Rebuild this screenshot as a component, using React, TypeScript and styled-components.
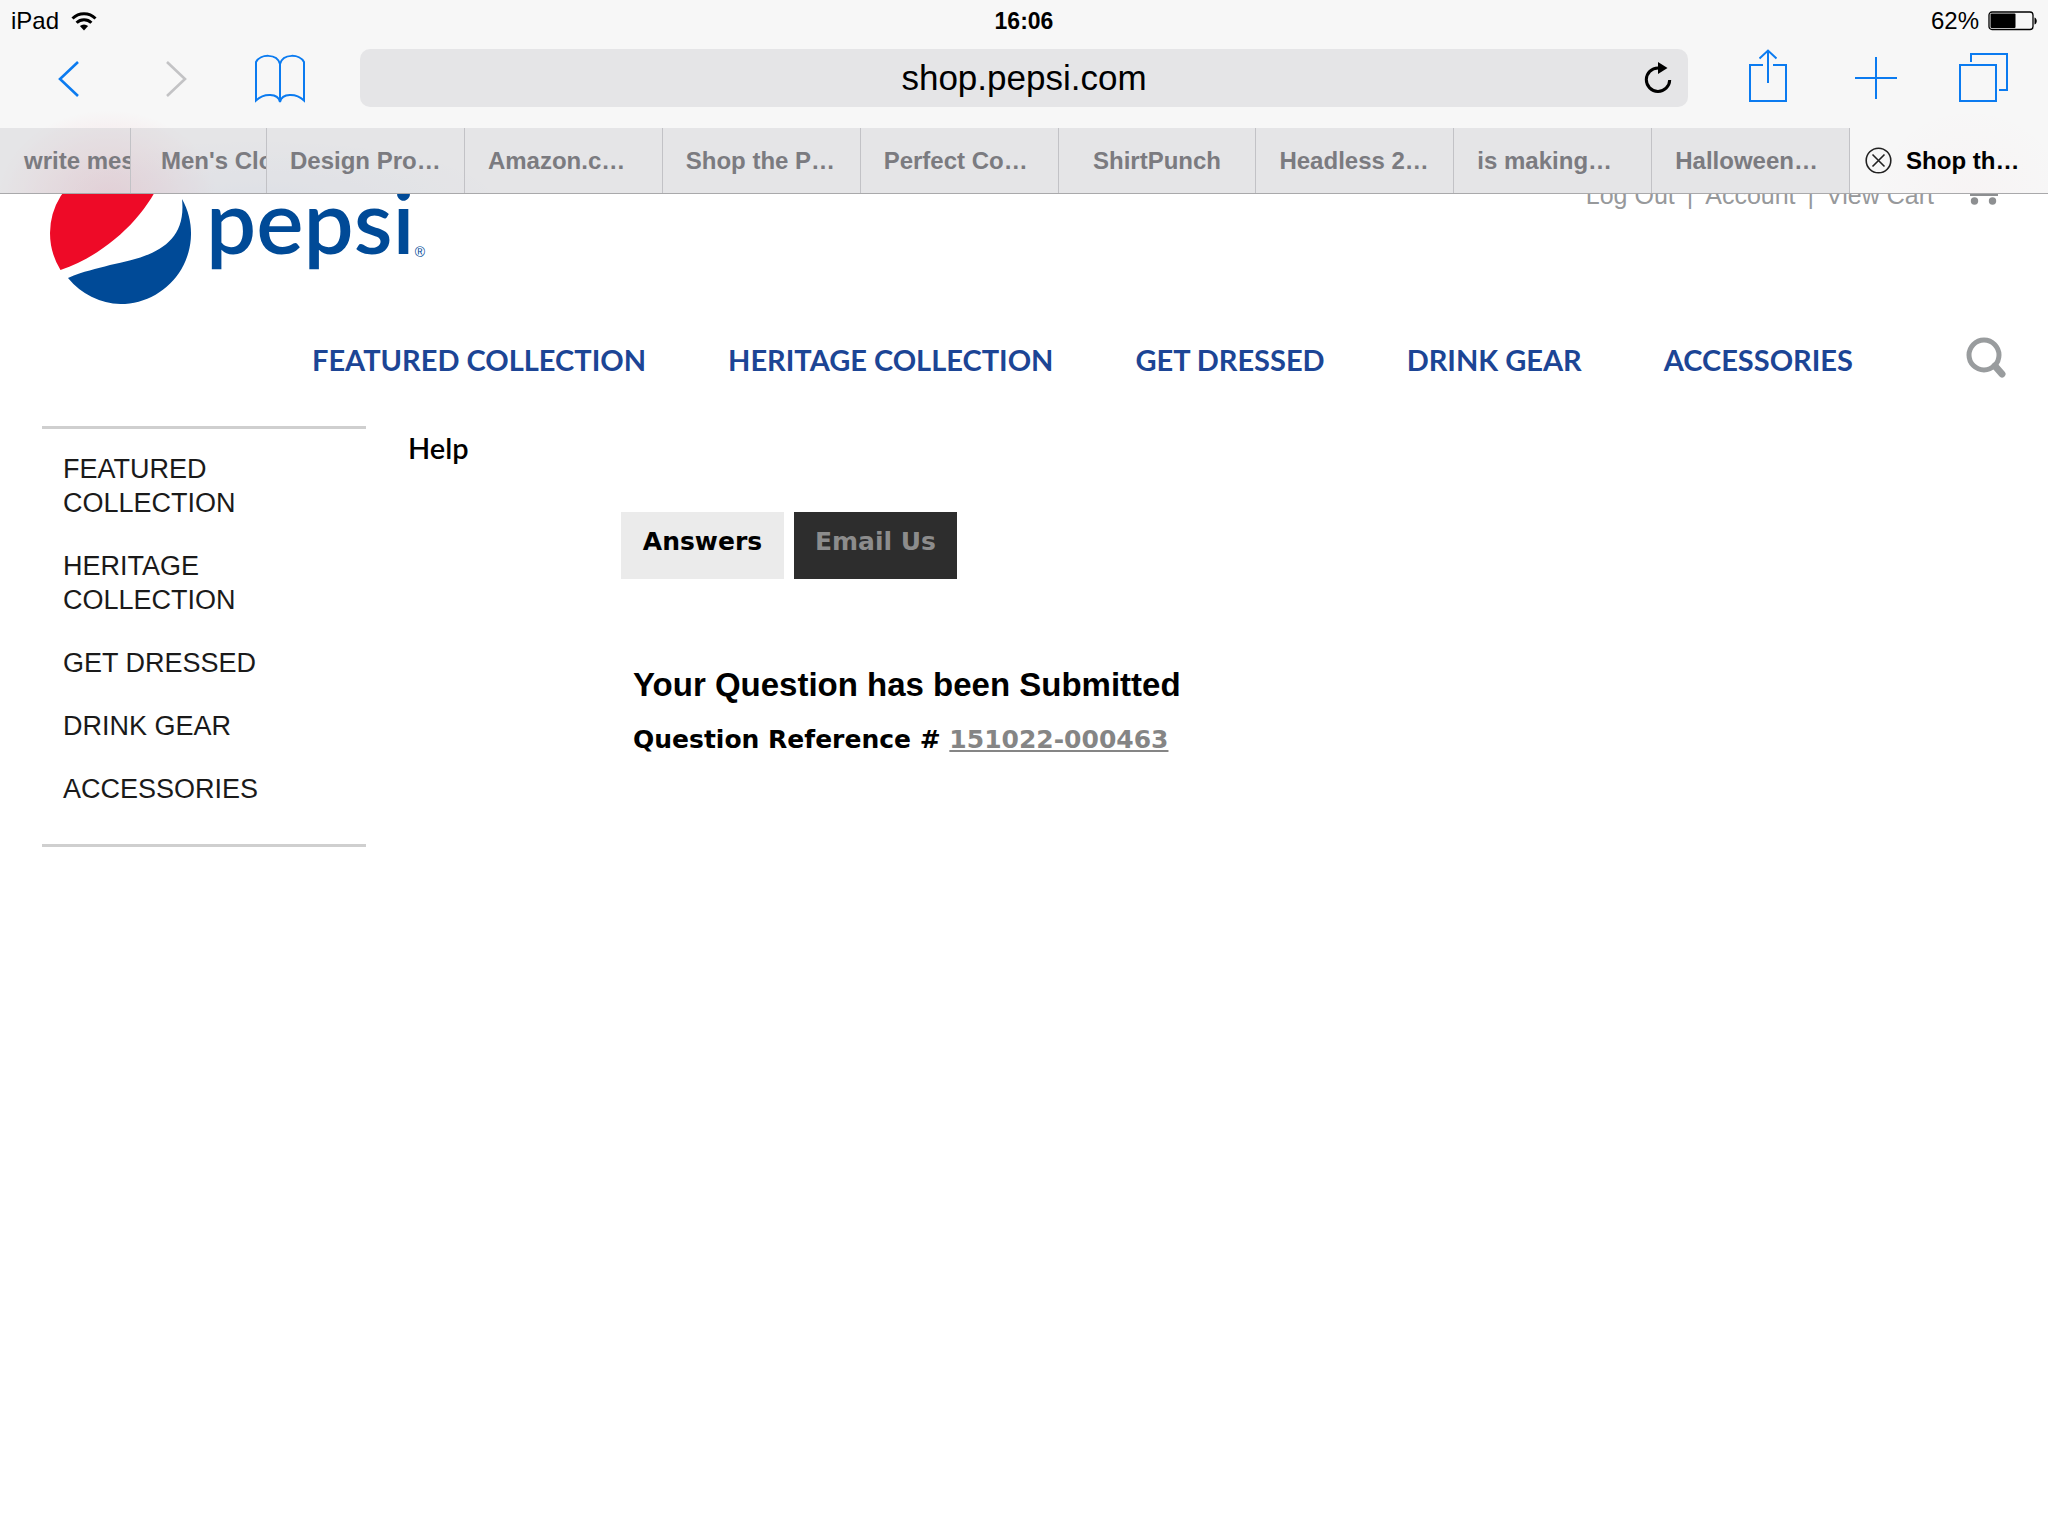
import React from "react";
import styled, { createGlobalStyle } from "styled-components";

const sans = `"Liberation Sans", Arial, sans-serif`;
const brand = `Lato, "Open Sans", sans-serif`;
const help = `"DejaVu Sans", Verdana, sans-serif`;

const GlobalStyle = createGlobalStyle`
  *, *::before, *::after { box-sizing: border-box; }
  body { margin: 0; background: #fff; font-family: ${sans}; color: #000; }
  a { color: inherit; text-decoration: none; }
  ul { list-style: none; margin: 0; padding: 0; }
  button { font: inherit; color: inherit; border: 0; padding: 0; background: none; }
  svg { display: block; }
`;

const Chrome = styled.header`
  position: sticky;
  top: 0;
  z-index: 1;
  border-bottom: 1px solid #a9a9ab;
  background:
    radial-gradient(ellipse 110px 90px at 108px 200px, rgba(240, 80, 110, 0.2), transparent),
    radial-gradient(ellipse 240px 60px at 260px 200px, rgba(60, 120, 220, 0.06), transparent),
    radial-gradient(ellipse 100px 90px at 1970px 194px, rgba(240, 80, 110, 0.02), transparent),
    #f7f7f7;
`;

const StatusBar = styled.div`
  display: grid;
  grid-template-columns: 1fr auto 1fr;
  align-items: center;
  height: 42px;
  padding: 0 11px;
  font-size: 24px;
`;

const StatusGroup = styled.div<{ $end?: boolean }>`
  display: flex;
  align-items: center;
  gap: ${(p) => (p.$end ? 9 : 12)}px;
  justify-content: ${(p) => (p.$end ? "flex-end" : "flex-start")};
`;

const Clock = styled.strong`
  font-size: 23px;
`;

const ToolBar = styled.div`
  display: flex;
  align-items: center;
  height: 86px;
  padding: 0 39px 14px 44px;
`;

const ToolButton = styled.button<{ $color?: string }>`
  display: grid;
  place-items: center;
  width: 50px;
  height: 58px;
  color: ${(p) => p.$color ?? "#0b7bf0"};
`;

const BackForward = styled.div`
  display: flex;
  gap: 57px;
  margin-right: 54px;
`;

const AddressBar = styled.div`
  display: grid;
  grid-template-columns: 60px 1fr 60px;
  justify-items: center;
  flex: 1;
  height: 58px;
  margin: 0 55px;
  border-radius: 10px;
  background: #e5e5e7;
`;

const Address = styled.input`
  grid-column: 2;
  width: 100%;
  min-width: 0;
  border: 0;
  padding: 0;
  background: none;
  text-align: center;
  font: 35px ${sans};
  color: #000;
`;

const Actions = styled.div`
  display: flex;
  gap: 58px;
`;

const TabStrip = styled.nav`
  display: grid;
  grid-template-columns: 131px 136px repeat(9, minmax(0, 1fr));
  height: 65px;
  font-size: 24px;
  font-weight: bold;
  color: #7b7b80;
`;

const BrowserTab = styled.button<{ $inset?: number; $short?: boolean }>`
  overflow: hidden;
  padding: 0 0 0 ${(p) => (p.$short ? 0 : (p.$inset ?? 23))}px;
  border-right: 1px solid #c2c2c6;
  background: rgba(200, 200, 206, 0.38);
  text-align: ${(p) => (p.$short ? "center" : "left")};
  white-space: nowrap;
`;

const ActiveTab = styled.div`
  display: flex;
  align-items: center;
  gap: 14px;
  padding-left: 15px;
  color: #000;
  white-space: nowrap;
`;

const Masthead = styled.div`
  display: flex;
  justify-content: space-between;
  align-items: flex-start;
  height: 142px;
  margin-top: -32px;
  padding: 0 50px;
`;

const Logo = styled.a`
  display: flex;
  align-items: flex-start;
  gap: 14px;
  color: #004a97;
`;

const Wordmark = styled.span`
  display: flex;
  align-items: flex-end;
  font: 600 89px/116px ${brand};
`;

const Registered = styled.small`
  font: 14px/52px ${sans};
`;

const AccountNav = styled.nav`
  display: flex;
  gap: 12px;
  padding-top: 17px;
  font-size: 25px;
  line-height: 32px;
  color: #97999b;
`;

const CartLink = styled.a`
  padding-left: 18px;
`;

const ShopNav = styled.nav`
  display: flex;
  align-items: center;
  gap: 82px;
  height: 112px;
  padding: 0 42px 0 312px;
  font: bold 29px/34px ${brand};
  color: #1c4595;
  white-space: nowrap;
`;

const SearchButton = styled.button`
  margin-left: auto;
  color: #999c9e;
`;

const Columns = styled.div`
  display: grid;
  grid-template-columns: 324px 1fr;
  align-items: start;
  column-gap: 42px;
  padding: 10px 42px;
`;

const SideList = styled.ul`
  display: grid;
  gap: 29px;
  padding: 23px 110px 38px 21px;
  border-top: 3px solid #cfcfcf;
  border-bottom: 3px solid #cfcfcf;
  font-size: 27px;
  line-height: 34px;
  color: #1a1a1a;
`;

const Title = styled.h1`
  margin: 5px 0 0;
  font: 600 29px/34px ${brand};
`;

const Panel = styled.section`
  padding: 47px 0 0 213px;
  font-family: ${help};
  font-size: 25px;
  font-weight: bold;
`;

const PanelTabs = styled.div`
  display: flex;
  gap: 10px;
`;

const PanelTab = styled.a<{ $active?: boolean }>`
  min-width: 163px;
  padding: 14px 20px 21px;
  line-height: 32px;
  text-align: center;
  color: ${(p) => (p.$active ? "#8c8c8c" : "#000")};
  background: ${(p) => (p.$active ? "#2d2d2d" : "#ebebeb")};
`;

const Message = styled.div`
  padding: 86px 0 0 12px;
`;

const MessageTitle = styled.h2`
  margin: 0 0 19px;
  font: bold 33px/40px ${sans};
`;

const Reference = styled.p`
  margin: 0;
  line-height: 32px;
`;

const ReferenceLink = styled.a`
  color: #858585;
  text-decoration: underline;
`;

const tabs = [
  { label: "write mes", inset: 24 },
  { label: "Men's Clo", inset: 30 },
  { label: "Design Pro…" },
  { label: "Amazon.c…" },
  { label: "Shop the P…" },
  { label: "Perfect Co…" },
  { label: "ShirtPunch", short: true },
  { label: "Headless 2…" },
  { label: "is making…" },
  { label: "Halloween…" },
];

const categories = [
  "FEATURED COLLECTION",
  "HERITAGE COLLECTION",
  "GET DRESSED",
  "DRINK GEAR",
  "ACCESSORIES",
];

export default function App() {
  return (
    <>
      <GlobalStyle />
      <Chrome>
        <StatusBar>
          <StatusGroup>
            iPad
            <svg width="26" height="20" viewBox="0 0 26 20" fill="none" stroke="#000" strokeWidth="3">
              <path d="M1.5 7.5a16.3 16.3 0 0 1 23 0M5.6 11.7a10.5 10.5 0 0 1 14.8 0" />
              <path d="M13 19.5 8.9 15a6 6 0 0 1 8.2 0z" fill="#000" stroke="none" />
            </svg>
          </StatusGroup>
          <Clock>16:06</Clock>
          <StatusGroup $end>
            62%
            <svg width="49" height="20" viewBox="0 0 49 20">
              <rect x="1" y="1" width="44" height="17.5" rx="3" fill="none" stroke="#000" strokeWidth="1.3" />
              <rect x="2.500" y="2.500" width="25" height="14.500" rx="1" />
              <path d="M46.500 6.500c3 1 3 6 0 7z" />
            </svg>
          </StatusGroup>
        </StatusBar>
        <ToolBar>
          <BackForward>
            <ToolButton aria-label="Back">
              <svg width="22" height="38" viewBox="0 0 22 38" fill="none" stroke="currentColor" strokeWidth="2.6">
                <path d="M20 3 2 20l18 17" />
              </svg>
            </ToolButton>
            <ToolButton aria-label="Forward" $color="#c3c3c5">
              <svg width="22" height="38" viewBox="0 0 22 38" fill="none" stroke="currentColor" strokeWidth="2.6">
                <path d="m2 3 18 17L2 37" />
              </svg>
            </ToolButton>
          </BackForward>
          <ToolButton aria-label="Bookmarks">
            <svg width="50" height="50" viewBox="0 0 50 50" fill="none" stroke="currentColor" strokeWidth="2">
              <path d="M25 49C23 40 9 40 1 47.500V9C5 1 22 0 25 11 28 0 45 1 49 9v38.500C41 40 27 40 25 49zV11" />
            </svg>
          </ToolButton>
          <AddressBar>
            <Address aria-label="Address" defaultValue="shop.pepsi.com" />
            <ToolButton aria-label="Reload" $color="#000">
              <svg width="28" height="32" viewBox="0 0 28 32" fill="none" stroke="currentColor" strokeWidth="3">
                <path d="M14 6a11.700 11.700 0 1 0 11.700 12" />
                <path d="M14 0v12l9.500-6z" fill="currentColor" stroke="none" />
              </svg>
            </ToolButton>
          </AddressBar>
          <Actions>
            <ToolButton aria-label="Share">
              <svg width="40" height="58" viewBox="0 0 40 58" fill="none" stroke="currentColor" strokeWidth="2">
                <path d="M15 16H2v36h36V16H25M20 34V2M11.500 9.500 20 1.500l8.500 8" />
              </svg>
            </ToolButton>
            <ToolButton aria-label="New tab">
              <svg width="42" height="42" viewBox="0 0 42 42" fill="none" stroke="currentColor" strokeWidth="2">
                <path d="M21 0v42M0 21h42" />
              </svg>
            </ToolButton>
            <ToolButton aria-label="Show all tabs">
              <svg width="50" height="50" viewBox="0 0 50 50" fill="none" stroke="currentColor" strokeWidth="2">
                <path d="M1 12h36v36H1zM12 9V1h36v36h-8" />
              </svg>
            </ToolButton>
          </Actions>
        </ToolBar>
        <TabStrip aria-label="Open tabs">
          {tabs.map((t) => (
            <BrowserTab key={t.label} $inset={t.inset} $short={t.short}>
              {t.label}
            </BrowserTab>
          ))}
          <ActiveTab>
            <button aria-label="Close tab">
              <svg width="27" height="27" viewBox="0 0 27 27" fill="none" stroke="#222" strokeWidth="1.6">
                <circle cx="13.500" cy="13.500" r="12.300" />
                <path d="m7.500 7.500 12 12M19.500 7.500l-12 12" />
              </svg>
            </button>
            Shop th…
          </ActiveTab>
        </TabStrip>
      </Chrome>

      <Masthead>
        <Logo href="#" aria-label="pepsi">
          <svg width="142" height="142" viewBox="0 0 142 142">
            <path
              d="M10.500 108A70.500 70.500 0 0 1 0 71A70.500 70.500 0 0 1 112 14.500C98 52 58 92 10.500 108z"
              fill="#ee0a27"
            />
            <path
              d="M132 37A70.500 70.500 0 0 1 70.500 142A70.500 70.500 0 0 1 18 116C34 109 46 107 60 103 100 95 137 84 132 37z"
              fill="#004a97"
            />
          </svg>
          <Wordmark>
            pepsi<Registered>®</Registered>
          </Wordmark>
        </Logo>
        <AccountNav>
          <a href="#">Log Out</a>
          <span>|</span>
          <a href="#">Account</a>
          <span>|</span>
          <a href="#">View Cart</a>
          <CartLink href="#" aria-label="Cart">
            <svg width="34" height="30" viewBox="0 0 34 30" fill="#8d8f91">
              <path d="M7 0h27l-3 12H9zM6 14h28v3H6z" />
              <circle cx="10.500" cy="22" r="3.700" />
              <circle cx="28.500" cy="22" r="3.700" />
            </svg>
          </CartLink>
        </AccountNav>
      </Masthead>

      <ShopNav>
        {categories.map((c) => (
          <a key={c} href="#">{c}</a>
        ))}
        <SearchButton aria-label="Search">
          <svg width="40" height="46" viewBox="0 0 40 46" fill="none" stroke="currentColor">
            <circle cx="18" cy="18" r="15" strokeWidth="5" />
            <path d="m29 29 7 8" strokeWidth="7" strokeLinecap="round" />
          </svg>
        </SearchButton>
      </ShopNav>

      <Columns>
        <SideList>
          {categories.map((c) => (
            <li key={c}>
              <a href="#">{c}</a>
            </li>
          ))}
        </SideList>
        <main>
          <Title>Help</Title>
          <Panel>
            <PanelTabs>
              <PanelTab href="#">Answers</PanelTab>
              <PanelTab href="#" $active>Email Us</PanelTab>
            </PanelTabs>
            <Message>
              <MessageTitle>Your Question has been Submitted</MessageTitle>
              <Reference>
                Question Reference # <ReferenceLink href="#">151022-000463</ReferenceLink>
              </Reference>
            </Message>
          </Panel>
        </main>
      </Columns>
    </>
  );
}
